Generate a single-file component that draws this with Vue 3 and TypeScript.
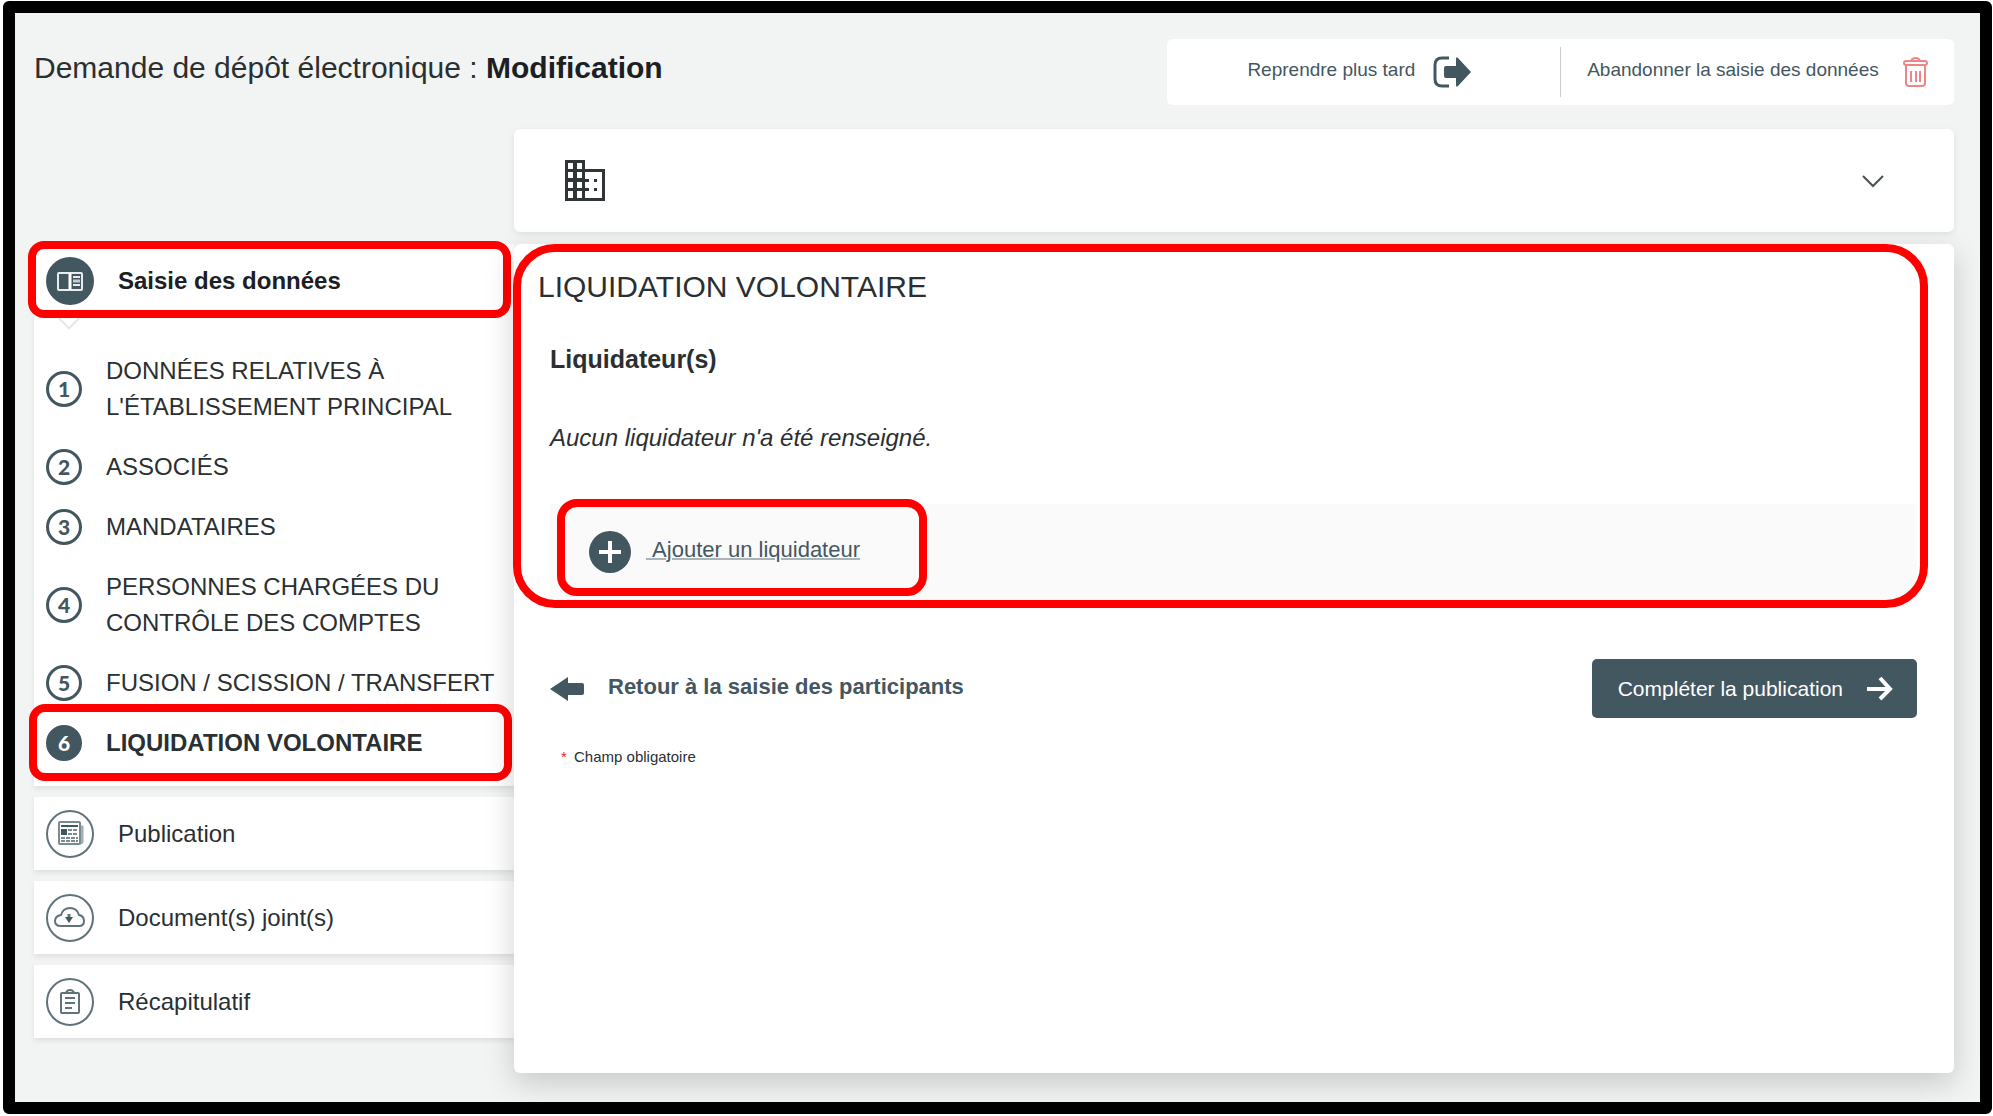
<script setup lang="ts">
interface Step {
  id: number
  label: string
}

const steps: Step[] = [
  { id: 1, label: "DONNÉES RELATIVES À L'ÉTABLISSEMENT PRINCIPAL" },
  { id: 2, label: 'ASSOCIÉS' },
  { id: 3, label: 'MANDATAIRES' },
  { id: 4, label: 'PERSONNES CHARGÉES DU CONTRÔLE DES COMPTES' },
  { id: 5, label: 'FUSION / SCISSION / TRANSFERT' },
  { id: 6, label: 'LIQUIDATION VOLONTAIRE' },
]
const current = 6
</script>

<template>
  <div class="frame">
    <header class="top">
      <h1 class="title">Demande de dépôt électronique : <strong>Modification</strong></h1>
      <div class="actions">
        <button type="button" class="action">
          <span class="lbl">Reprendre plus tard</span>
          <svg width="46" height="32" viewBox="0 0 46 32" aria-hidden="true">
            <path d="M16 2H9Q2 2 2 9V23Q2 30 9 30H16" fill="none" stroke="#435761" stroke-width="3" />
            <path d="M11 12Q11 10 13 10H23V3Q23 0 25 2L38 16L25 30Q23 32 23 29V22H13Q11 22 11 20Z" fill="#435761" />
          </svg>
        </button>
        <span class="divider"></span>
        <button type="button" class="action">
          <span class="lbl">Abandonner la saisie des données</span>
          <svg width="31" height="32" viewBox="0 0 31 32" fill="none" stroke="#f08585" stroke-width="2" aria-hidden="true">
            <rect x="7" y="5" width="23" height="4" rx="2" />
            <path d="M14 5Q15 2 19 2Q22 2 23 5M9 9V27Q9 30 12 30H25Q28 30 28 27V9M14 15V26M19 15V26M23 15V26" />
          </svg>
        </button>
      </div>
    </header>

    <div class="layout">
      <button type="button" class="summary" aria-label="Afficher la société">
        <svg width="40" height="41" viewBox="0 0 40 41" aria-hidden="true">
          <path
            fill="#2f3436"
            fill-rule="evenodd"
            d="M0 0H20V9H40V41H0ZM3 3V9H8V3ZM12 3V9H17V3ZM3 12V18H8V12ZM12 12V18H17V12ZM3 22V28H8V22ZM12 22V28H17V22ZM3 31V38H8V31ZM12 31V38H17V31ZM20 12V19H24V22H20V28H24V31H20V38H37V12ZM29 19H32V22H29ZM29 28H32V31H29Z"
          />
        </svg>
        <svg width="22" height="14" viewBox="0 0 22 14" fill="none" stroke="#4a5154" stroke-width="2" aria-hidden="true">
          <path d="M1 2L11 12L21 2" />
        </svg>
      </button>

      <nav class="sidebar" aria-label="Étapes">
        <section class="group">
          <a href="#saisie" class="stage open marked">
            <svg width="48" height="48" viewBox="0 0 48 48" aria-hidden="true">
              <circle cx="24" cy="24" r="24" fill="#435761" />
              <rect x="12" y="16" width="24" height="17" rx="1" fill="none" stroke="#e8ecee" stroke-width="2" />
              <path d="M24 16V33" stroke="#fff" stroke-width="3" />
              <path d="M27 20H34M27 28H34" stroke="#e8ecee" stroke-width="2" />
              <path d="M27 24H34" stroke="#c3cbcf" stroke-width="3" />
            </svg>
            <span>Saisie des données</span>
          </a>
          <ol class="steps">
            <li v-for="s in steps" :key="s.id">
              <a :href="'#etape-' + s.id" class="step" :class="{ current: s.id === current, marked: s.id === current }">
                <span class="num">{{ s.id }}</span>
                <span>{{ s.label }}</span>
              </a>
            </li>
          </ol>
        </section>
        <a href="#publication" class="stage">
          <svg width="48" height="48" viewBox="0 0 48 48" aria-hidden="true">
            <circle cx="24" cy="24" r="23" fill="#fff" stroke="#61727a" stroke-width="2" />
            <path d="M34 16H37V32Q37 34 34 34Z" fill="#aab4b8" stroke="#9aa6ab" stroke-width="1" />
            <rect x="13" y="12" width="21" height="22" rx="1" fill="#fff" stroke="#7b8990" stroke-width="2" />
            <path d="M15 16H32" stroke="#435761" stroke-width="2" />
            <rect x="15" y="19" width="6" height="6" fill="#435761" />
            <path d="M22 20H32M22 24H32M15 28H32M15 31H32" stroke="#7b8990" stroke-width="2" stroke-dasharray="4 1" />
          </svg>
          <span>Publication</span>
        </a>
        <a href="#documents" class="stage">
          <svg width="48" height="48" viewBox="0 0 48 48" fill="none" stroke="#61727a" stroke-width="2" aria-hidden="true">
            <circle cx="24" cy="24" r="23" fill="#fff" />
            <path d="M15 32Q9 32 9 27Q9 22 15 21Q17 14 24 14Q31 14 33 21Q38 22 38 27Q38 32 33 32Z" />
            <path d="M23 20V26" stroke-width="3" />
            <path d="M19 23H27L23 29Z" fill="#435761" stroke="none" />
          </svg>
          <span>Document(s) joint(s)</span>
        </a>
        <a href="#recapitulatif" class="stage">
          <svg width="48" height="48" viewBox="0 0 48 48" fill="none" stroke="#61727a" stroke-width="2" aria-hidden="true">
            <circle cx="24" cy="24" r="23" fill="#fff" />
            <rect x="15" y="15" width="18" height="20" rx="1" />
            <path d="M20 15Q21 12 24 12Q27 12 28 15M19 20H29M19 25H29M19 30H26" />
          </svg>
          <span>Récapitulatif</span>
        </a>
      </nav>

      <main class="panel">
        <section class="content marked">
          <h2>LIQUIDATION VOLONTAIRE</h2>
          <h3>Liquidateur(s)</h3>
          <p class="empty">Aucun liquidateur n'a été renseigné.</p>
          <div class="adder">
            <button type="button" class="add marked">
              <svg width="42" height="42" viewBox="0 0 42 42" aria-hidden="true">
                <circle cx="21" cy="21" r="21" fill="#435761" />
                <path d="M21 10V32M10 21H32" stroke="#fff" stroke-width="4" />
              </svg>
              <span class="lbl">&nbsp;Ajouter un liquidateur</span>
            </button>
          </div>
        </section>
        <div class="nav">
          <a href="#participants" class="back">
            <svg width="34" height="24" viewBox="0 0 34 24" aria-hidden="true">
              <path d="M0 12L18 0V6H32Q34 6 34 8V16Q34 18 32 18H18V24Z" fill="#435761" />
            </svg>
            <span class="lbl">Retour à la saisie des participants</span>
          </a>
          <button type="button" class="next">
            <span>Compléter la publication</span>
            <svg width="26" height="25" viewBox="0 0 26 25" fill="none" stroke="#fff" stroke-width="4" aria-hidden="true">
              <path d="M0 13H23M13 2L23 13L13 23" />
            </svg>
          </button>
        </div>
        <p class="required"><span class="star">*</span> Champ obligatoire</p>
      </main>
    </div>
  </div>
</template>

<style>
body {
  margin: 0;
  background: #fff;
}
</style>

<style scoped>
* {
  box-sizing: border-box;
}

.frame {
  display: flex;
  flex-direction: column;
  min-height: calc(100vh - 3px);
  margin: 1px 1px 2px 3px;
  padding: 26px 26px 29px 19px;
  border: 12px solid #000;
  border-radius: 6px;
  background: #f2f4f4;
  color: #2a2f32;
  font-family: "Liberation Sans", Arial, sans-serif;
  font-size: 24px;
  line-height: 36px;
}

h1,
h2,
h3,
p,
ol {
  margin: 0;
  padding: 0;
}

button {
  border: 0;
  padding: 0;
  background: none;
  color: inherit;
  font: inherit;
  cursor: pointer;
}

a {
  color: inherit;
  text-decoration: none;
}

svg {
  flex: none;
}

.top {
  display: flex;
  justify-content: space-between;
  align-items: flex-start;
  margin-bottom: 24px;
}

.title {
  margin-top: 11px;
  font-size: 30px;
  font-weight: 400;
}

.title strong {
  color: #1c2023;
}

.actions {
  display: flex;
  align-items: center;
  width: 41%;
  height: 66px;
  border-radius: 6px;
  background: #fff;
}

.action {
  display: flex;
  flex: 1;
  justify-content: center;
  align-items: center;
  gap: 18px;
  color: #435761;
  font-size: 19px;
}

.lbl {
  padding-bottom: 4px;
}

.divider {
  width: 1px;
  height: 50px;
  background: #c8cccd;
}

.layout {
  display: grid;
  flex: 1;
  grid-template-columns: 480px 1fr;
  grid-template-rows: auto 1fr;
  row-gap: 12px;
}

.summary {
  display: flex;
  grid-column: 2;
  justify-content: space-between;
  align-items: center;
  height: 103px;
  padding: 0 70px 0 51px;
  border-radius: 6px;
  background: #fff;
  box-shadow: 0 2px 6px rgba(0, 0, 0, 0.08);
}

.marked {
  position: relative;
}

.marked::after {
  position: absolute;
  border: 8px solid #f00;
  content: "";
  pointer-events: none;
}

.sidebar {
  display: flex;
  flex-direction: column;
  gap: 11px;
}

.group,
.sidebar > .stage {
  background: #fff;
  box-shadow: 0 3px 5px rgba(0, 0, 0, 0.08);
}

.stage {
  display: flex;
  align-items: center;
  gap: 24px;
  height: 73px;
  padding-left: 12px;
}

.stage.open {
  color: #1c2023;
  font-weight: 700;
}

.stage.open::before {
  position: absolute;
  bottom: -9px;
  left: 26px;
  width: 16px;
  height: 16px;
  border: solid #e6e8e8;
  border-width: 0 2px 2px 0;
  content: "";
  transform: rotate(45deg);
}

.stage.open::after {
  inset: -3px 3px -1px -6px;
  border-radius: 16px;
}

.steps {
  display: flex;
  flex-direction: column;
  gap: 24px;
  padding: 36px 0 25px 12px;
  list-style: none;
}

.step {
  display: flex;
  align-items: center;
  gap: 24px;
}

.step.current {
  font-weight: 700;
}

.step.current::after {
  inset: -21px 2px -20px -17px;
  border-radius: 16px;
}

.num {
  display: flex;
  flex: none;
  justify-content: center;
  align-items: center;
  width: 36px;
  height: 36px;
  border: 3px solid #435761;
  border-radius: 50%;
  color: #435761;
  font-family: Lato, sans-serif;
  font-size: 21px;
  font-weight: 900;
}

.current .num {
  background: #435761;
  color: #fff;
}

.panel {
  position: relative;
  border-radius: 6px;
  background: #fff;
  box-shadow: 0 10px 30px rgba(0, 0, 0, 0.18);
}

.content {
  margin-right: 26px;
  padding: 25px 11px 8px 36px;
}

.content::after {
  inset: 0 0 0 -1px;
  border-radius: 42px;
}

h2 {
  margin: 0 0 36px -12px;
  font-size: 30px;
  font-weight: 400;
}

h3 {
  margin-bottom: 43px;
  font-size: 25px;
  font-weight: 700;
}

.empty {
  margin-bottom: 48px;
  font-style: italic;
}

.adder {
  display: flex;
  height: 96px;
  padding-left: 7px;
  background: #fafafa;
}

.add {
  display: flex;
  align-items: center;
  gap: 15px;
  padding: 0 67px 0 32px;
  color: #435761;
  font-size: 22px;
  text-decoration: underline;
  text-decoration-color: #a9b4b8;
  text-decoration-thickness: 2px;
}

.add::after {
  inset: -5px 0 4px;
  border-radius: 20px;
}

.nav {
  display: flex;
  justify-content: space-between;
  align-items: center;
  margin-top: 51px;
  padding: 0 37px 0 36px;
}

.back {
  display: flex;
  align-items: center;
  gap: 24px;
  color: #435761;
  font-size: 22px;
  font-weight: 700;
}

.next {
  display: flex;
  align-items: center;
  gap: 24px;
  height: 59px;
  padding: 0 24px 0 26px;
  border-radius: 5px;
  background: #435761;
  color: #fff;
  font-size: 21px;
}

.required {
  margin: 29px 0 0 47px;
  font-size: 15px;
  line-height: 20px;
}

.star {
  margin-right: 3px;
  color: #e22;
}
</style>
